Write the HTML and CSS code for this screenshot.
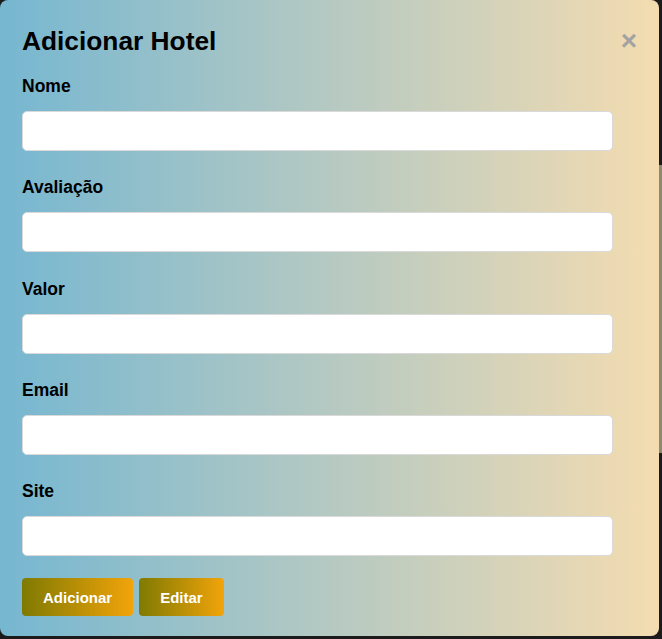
FILE: index.html
```html
<!DOCTYPE html>
<html lang="pt">
<head>
<meta charset="utf-8">
<title>Adicionar Hotel</title>
<link rel="stylesheet" href="styles.css">
</head>
<body>
<div class="page-behind"></div>
<div class="modal">
  <span class="close">&times;</span>
  <h2 class="title">Adicionar Hotel</h2>
  <form class="form">
    <div class="field">
      <label class="label">Nome</label>
      <input class="input" type="text">
    </div>
    <div class="field">
      <label class="label">Avaliação</label>
      <input class="input" type="text">
    </div>
    <div class="field">
      <label class="label">Valor</label>
      <input class="input" type="text">
    </div>
    <div class="field">
      <label class="label">Email</label>
      <input class="input" type="text">
    </div>
    <div class="field field-last">
      <label class="label">Site</label>
      <input class="input" type="text">
    </div>
    <div class="actions">
      <button type="button" class="btn">Adicionar</button>
      <button type="button" class="btn">Editar</button>
    </div>
  </form>
</div>
</body>
</html>
```
FILE: styles.css
```css
html, body {
  margin: 0;
  padding: 0;
}
body {
  background: #1b1b1b;
  width: 662px;
  height: 639px;
  overflow: hidden;
  position: relative;
  font-family: "Liberation Sans", Arial, sans-serif;
}
.page-behind {
  position: absolute;
  left: 400px;
  top: 165px;
  width: 262px;
  height: 288px;
  background: #8e8970;
}
.modal {
  position: relative;
  box-sizing: border-box;
  width: 659px;
  height: 636px;
  padding: 20px 22px 20px 22px;
  border-radius: 8px;
  background: linear-gradient(to right, #76b7d1 0%, #b5c9c2 50%, #f4dcb0 100%);
}
.close {
  position: absolute;
  top: 26px;
  right: 22px;
  font-size: 28px;
  line-height: 30px;
  font-weight: bold;
  color: #a3a3a3;
}
.title {
  margin: 5.5px 0 21.5px 0;
  font-size: 26.3px;
  line-height: 30px;
  font-weight: bold;
  color: #000;
}
.form {
  margin: 0;
}
.field {
  margin-bottom: 27.25px;
}
.field-last {
  margin-bottom: 22px;
}
.label {
  display: block;
  font-size: 17.5px;
  line-height: 18px;
  font-weight: bold;
  color: #000;
  margin-bottom: 16px;
}
.input {
  display: block;
  box-sizing: border-box;
  width: 591px;
  height: 40px;
  margin: 0;
  padding: 0 10px;
  border: 1px solid #d9d9d9;
  border-radius: 5px;
  background: #fff;
  font-family: "Liberation Sans", Arial, sans-serif;
  font-size: 14px;
}
.actions {
  display: flex;
  gap: 6px;
}
.btn {
  height: 38px;
  padding: 0 21px;
  border: none;
  border-radius: 4px;
  background: linear-gradient(to right, #7f7a02 0%, #f2a40a 100%);
  color: #fff;
  font-family: "Liberation Sans", Arial, sans-serif;
  font-size: 15px;
  font-weight: bold;
}
```
